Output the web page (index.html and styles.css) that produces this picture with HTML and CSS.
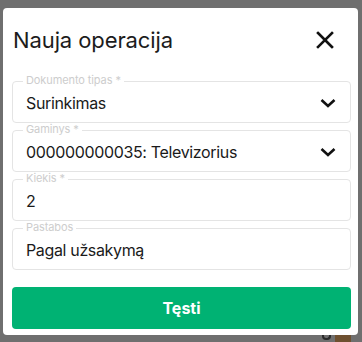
FILE: index.html
```html
<!DOCTYPE html>
<html lang="lt">
<head>
<meta charset="utf-8">
<link rel="stylesheet" href="styles.css">
</head>
<body>
<div class="dialog">
  <div class="head">
    <h1 class="title">Nauja operacija</h1>
    <svg class="close" width="18" height="18" viewBox="0 0 18 18"><path d="M2 2 L16 16 M16 2 L2 16" stroke="#111" stroke-width="2.6" stroke-linecap="square" fill="none"/></svg>
  </div>
  <div class="fields">
    <div class="field">
      <span class="label">Dokumento tipas *</span>
      <span class="value">Surinkimas</span>
      <svg class="chev" width="16" height="10" viewBox="0 0 16 10"><path d="M1.5 2 L8 8 L14.5 2" stroke="#111" stroke-width="2.6" fill="none"/></svg>
    </div>
    <div class="field">
      <span class="label">Gaminys *</span>
      <span class="value">000000000035: Televizorius</span>
      <svg class="chev" width="16" height="10" viewBox="0 0 16 10"><path d="M1.5 2 L8 8 L14.5 2" stroke="#111" stroke-width="2.6" fill="none"/></svg>
    </div>
    <div class="field">
      <span class="label">Kiekis *</span>
      <span class="value">2</span>
    </div>
    <div class="field">
      <span class="label">Pastabos</span>
      <span class="value">Pagal užsakymą</span>
    </div>
  </div>
  <button class="btn">Tęsti</button>
</div>
<div class="under">
  <span class="under-mark"></span>
  <span class="under-block"></span>
</div>
</body>
</html>
```
FILE: styles.css
```css
html, body {
  margin: 0;
  padding: 0;
  background: #6f6f6f;
  font-family: Inter, "Noto Sans", sans-serif;
  width: 362px;
  height: 342px;
  overflow: hidden;
}
.dialog {
  margin: 8px 4px 0 3px;
  height: 327px;
  box-sizing: border-box;
  background: #fff;
  border-radius: 4px;
  padding: 18px 7px 6px 9px;
  display: flex;
  flex-direction: column;
}
.head {
  display: flex;
  align-items: center;
  justify-content: space-between;
  height: 28px;
}
.title {
  margin: 0;
  font-size: 22px;
  line-height: 28px;
  font-weight: 400;
  color: #1c1c1c;
  padding-left: 1px;
  letter-spacing: -0.1px;
}
.close {
  margin-right: 17px;
}
.fields {
  display: flex;
  flex-direction: column;
  gap: 7px;
  margin-top: 27px;
}
.field {
  position: relative;
  height: 42px;
  box-sizing: border-box;
  border: 1px solid #e4e4e4;
  border-radius: 4px;
  display: flex;
  align-items: center;
  justify-content: space-between;
  padding: 0 14px 0 13px;
}
.label {
  position: absolute;
  top: -8px;
  left: 10px;
  padding: 0 3px;
  background: #fff;
  font-size: 11px;
  line-height: 13px;
  color: #cdcdcd;
  letter-spacing: -0.1px;
}
.value {
  font-size: 16px;
  line-height: 20px;
  color: #1a1a1a;
  padding-top: 1px;
  letter-spacing: -0.35px;
}
.chev {
  margin-top: 2px;
}
.btn {
  margin-top: 17px;
  height: 42px;
  border: 0;
  border-radius: 4px;
  background: #00b273;
  color: #fff;
  font-family: Inter, "Noto Sans", sans-serif;
  font-size: 16px;
  font-weight: 700;
}
.under {
  display: flex;
  justify-content: flex-end;
  align-items: flex-start;
  gap: 4px;
  padding-right: 11px;
  height: 7px;
}
.under-mark {
  width: 5px;
  height: 3px;
  border: 2px solid #2a2a2a;
  border-top: 0;
  border-radius: 0 0 4px 4px;
}
.under-block {
  width: 16px;
  height: 7px;
  background: #6e5030;
}
```
